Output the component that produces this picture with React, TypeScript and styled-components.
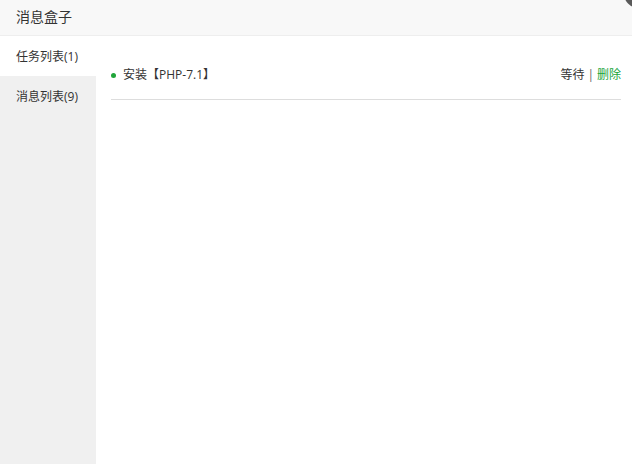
import React from "react";
import styled, { createGlobalStyle } from "styled-components";

const Global = createGlobalStyle`
  html, body { margin: 0; padding: 0; background: #fff; }
  body { font-family: "Open Sans", "Noto Sans CJK SC", sans-serif; color: #333; overflow: hidden; }
  * { box-sizing: border-box; }
`;

const Layer = styled.div`
  position: relative;
  width: 632px;
  height: 464px;
  display: flex;
  flex-direction: column;
  background: #fff;
  overflow: hidden;
`;

const Header = styled.div`
  height: 36px;
  flex: none;
  background: #f8f8f8;
  border-bottom: 1px solid #eee;
  padding: 0 0 3px 16px;
  display: flex;
  align-items: center;
  font-size: 14px;
  color: #333;
`;

const Close = styled.span`
  position: absolute;
  top: -27px;
  right: -27px;
  width: 36px;
  height: 36px;
  border-radius: 50%;
  background: #5a5a5a;
`;

const Body = styled.div`
  flex: 1;
  display: flex;
  min-height: 0;
`;

const Sidebar = styled.div`
  width: 96px;
  flex: none;
  background: #f0f0f0;
  display: flex;
  flex-direction: column;
`;

const Tab = styled.div<{ $active?: boolean }>`
  height: 40px;
  padding-left: 16px;
  display: flex;
  align-items: center;
  font-size: 12px;
  color: #333;
  background: ${(p) => (p.$active ? "#fff" : "transparent")};
`;

const Content = styled.div`
  flex: 1;
  padding: 20px 11px 0 15px;
`;

const Row = styled.div`
  display: flex;
  align-items: center;
  justify-content: space-between;
  border-bottom: 1px solid #ddd;
  font-size: 12px;
  line-height: 20px;
  padding: 9px 0 14px;
`;

const Name = styled.div`
  display: flex;
  align-items: center;
  gap: 7px;
`;

const Dot = styled.span`
  width: 5px;
  height: 5px;
  border-radius: 50%;
  background: #20a53a;
`;

const Actions = styled.div`
  display: flex;
  align-items: center;
  gap: 3px;
`;

const Sep = styled.span`
  color: #666;
`;

const Del = styled.a`
  color: #20a53a;
  text-decoration: none;
`;

export default function App() {
  return (
    <>
      <Global />
      <Layer>
        <Header>消息盒子</Header>
        <Close />
        <Body>
          <Sidebar>
            <Tab $active>任务列表(1)</Tab>
            <Tab>消息列表(9)</Tab>
          </Sidebar>
          <Content>
            <Row>
              <Name>
                <Dot />
                <span>安装【PHP-7.1】</span>
              </Name>
              <Actions>
                <span>等待</span>
                <Sep>|</Sep>
                <Del href="#">删除</Del>
              </Actions>
            </Row>
          </Content>
        </Body>
      </Layer>
    </>
  );
}
